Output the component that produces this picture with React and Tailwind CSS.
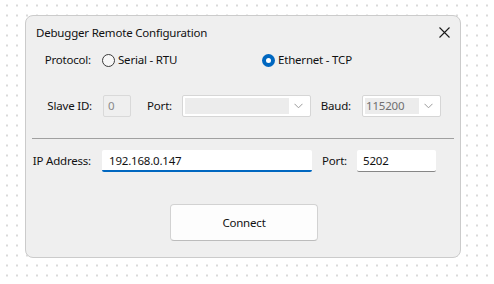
import React from "react";

const font = { fontFamily: '"Noto Sans", "Segoe UI", sans-serif' };

function Chevron() {
  return (
    <svg width="9" height="6" viewBox="0 0 9 6" className="shrink-0">
      <path d="M0.5 0.8 L4.5 4.8 L8.5 0.8" fill="none" stroke="#9a9a9a" strokeWidth="1" />
    </svg>
  );
}

function Combo({ w, value }) {
  return (
    <div
      className="h-[22px] flex items-stretch border border-[#d6d6d6] bg-white p-[2px] rounded-[2px]"
      style={{ width: w }}
    >
      <div className="flex-1 bg-[#ececec] flex items-center pl-[1px] text-[#6f6f6f]">{value}</div>
      <div className="w-[19px] flex items-center justify-center">
        <Chevron />
      </div>
    </div>
  );
}

export default function App() {
  return (
    <div
      className="w-[494px] h-[284px] bg-white bg-[radial-gradient(circle,#cdcdcd_0.6px,transparent_1px)] bg-[length:10px_10px] bg-[position:2px_0.5px] pt-[15px] pl-[25px] text-[11.5px] tracking-[-0.2px] text-[#111]"
      style={font}
    >
      <div className="w-[436px] h-[243px] bg-[#efefef] border border-[#cbcbcb] rounded-[8px] flex flex-col">
        {/* Title bar */}
        <div className="h-[32px] flex items-center pl-[10px] pr-[10px] pt-[1px]">
          <span className="flex-1">Debugger Remote Configuration</span>
          <svg width="11" height="11" viewBox="0 0 11 11">
            <path d="M0.5 0.5 L10.5 10.5 M10.5 0.5 L0.5 10.5" stroke="#1a1a1a" strokeWidth="1.1" />
          </svg>
        </div>

        {/* Protocol row */}
        <div className="h-[24px] flex items-center">
          <span className="w-[65px] text-right">Protocol:</span>
          <div className="ml-[11px] w-[160px] flex items-center gap-[3px]">
            <span className="w-[13px] h-[13px] rounded-full border border-[#3a3a3a] bg-[#f7f7f7]" />
            <span>Serial - RTU</span>
          </div>
          <div className="flex items-center gap-[3px]">
            <span className="w-[13px] h-[13px] rounded-full bg-[#0067c0] flex items-center justify-center">
              <span className="w-[5px] h-[5px] rounded-full bg-white" />
            </span>
            <span>Ethernet - TCP</span>
          </div>
        </div>

        {/* Serial row */}
        <div className="mt-[23px] h-[22px] flex items-center">
          <span className="w-[66px] text-right">Slave ID:</span>
          <div className="ml-[11px] w-[28px] h-[22px] border border-[#d9d9d9] rounded-[2px] flex items-center pl-[4px] text-[#8a8a8a]">
            0
          </div>
          <span className="w-[41px] text-right">Port:</span>
          <div className="ml-[10px]">
            <Combo w={129} value="" />
          </div>
          <span className="w-[40px] text-right">Baud:</span>
          <div className="ml-[11px]">
            <Combo w={79} value="115200" />
          </div>
        </div>

        {/* Separator */}
        <div className="mt-[21px] mx-[6px] h-px bg-[#a0a0a0]" />

        {/* TCP row */}
        <div className="mt-[11px] h-[22px] flex items-center">
          <span className="w-[65px] text-right">IP Address:</span>
          <div className="ml-[11px] w-[210px] h-[22px] bg-white border-b-2 border-[#0067c0] rounded-[2px] flex items-center pl-[7px] pt-[2px]">
            192.168.0.147
          </div>
          <span className="w-[35px] text-right">Port:</span>
          <div className="ml-[10px] w-[79px] h-[22px] bg-white border-b border-[#868686] rounded-[2px] flex items-center pl-[6px] pt-[1px]">
            5202
          </div>
        </div>

        {/* Button */}
        <div className="mt-[32px] flex">
          <button
            className="ml-[144px] w-[148px] h-[37px] bg-[#fdfdfd] border border-[#d2d2d2] border-b-[#bcbcbc] rounded-[4px] flex items-center justify-center text-[11.5px] tracking-[-0.2px]"
            style={font}
          >
            Connect
          </button>
        </div>
      </div>
    </div>
  );
}
